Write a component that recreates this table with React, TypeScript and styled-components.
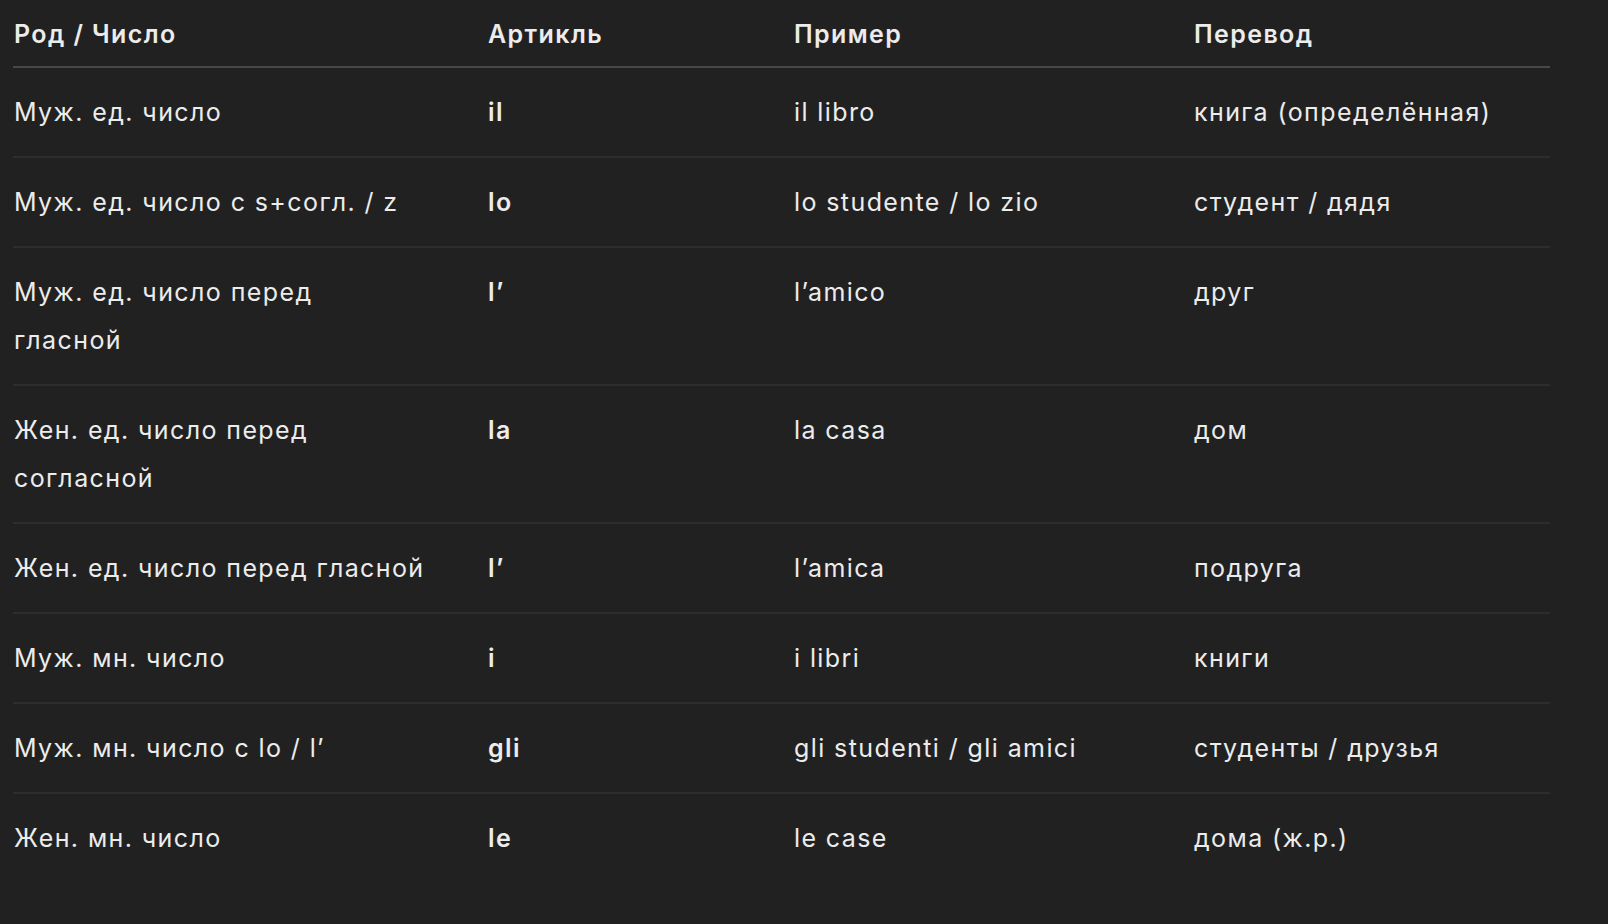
import React from "react";
import styled, { createGlobalStyle } from "styled-components";

const Global = createGlobalStyle`
  html, body { margin: 0; padding: 0; background: #212121; }
  body { font-family: Inter, "Noto Sans", sans-serif; color: #ececec; -webkit-font-smoothing: antialiased; }
`;

const Page = styled.div`
  padding: 0 0 0 13px;
  min-height: 924px;
  box-sizing: border-box;
  background: #212121;
`;

const Table = styled.table`
  width: 1537px;
  border-collapse: collapse;
  table-layout: fixed;
  font-size: 25px;
  letter-spacing: 1.4px;
  line-height: 48px;
`;

const HeadCell = styled.th`
  text-align: left;
  font-weight: 600;
  padding: 10px 0 8px 1px;
  border-bottom: 2px solid #484848;
  vertical-align: top;
`;

const Row = styled.tr<{ $last?: boolean }>`
  border-bottom: ${(p) => (p.$last ? "none" : "2px solid #2d2d2d")};
`;

const Cell = styled.td<{ $bold?: boolean; $wide?: boolean }>`
  padding: 20px ${(p) => (p.$wide ? "61px" : "24px")} 20px 1px;
  font-weight: ${(p) => (p.$bold ? 600 : 400)};
  vertical-align: top;
`;

const rows: [string, string, string, string][] = [
  ["Муж. ед. число", "il", "il libro", "книга (определённая)"],
  ["Муж. ед. число с s+согл. / z", "lo", "lo studente / lo zio", "студент / дядя"],
  ["Муж. ед. число перед гласной", "l’", "l’amico", "друг"],
  ["Жен. ед. число перед согласной", "la", "la casa", "дом"],
  ["Жен. ед. число перед гласной", "l’", "l’amica", "подруга"],
  ["Муж. мн. число", "i", "i libri", "книги"],
  ["Муж. мн. число с lo / l’", "gli", "gli studenti / gli amici", "студенты / друзья"],
  ["Жен. мн. число", "le", "le case", "дома (ж.р.)"],
];

export default function App() {
  return (
    <>
      <Global />
      <Page>
        <Table>
          <colgroup>
            <col style={{ width: 474 }} />
            <col style={{ width: 306 }} />
            <col style={{ width: 400 }} />
            <col style={{ width: 357 }} />
          </colgroup>
          <thead>
            <tr>
              <HeadCell>Род / Число</HeadCell>
              <HeadCell>Артикль</HeadCell>
              <HeadCell>Пример</HeadCell>
              <HeadCell>Перевод</HeadCell>
            </tr>
          </thead>
          <tbody>
            {rows.map((r, i) => (
              <Row key={i} $last={i === rows.length - 1}>
                <Cell $wide>{r[0]}</Cell>
                <Cell $bold>{r[1]}</Cell>
                <Cell>{r[2]}</Cell>
                <Cell>{r[3]}</Cell>
              </Row>
            ))}
          </tbody>
        </Table>
      </Page>
    </>
  );
}
